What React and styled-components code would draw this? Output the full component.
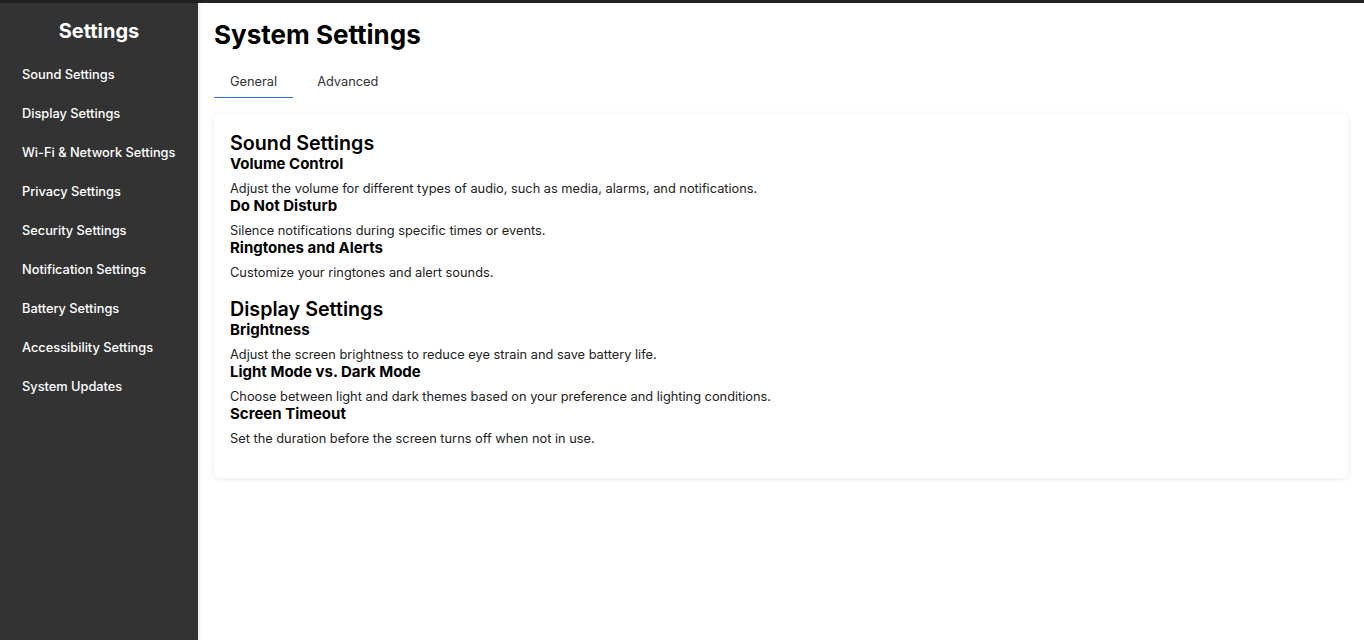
import React, { useState } from "react";
import styled, { createGlobalStyle } from "styled-components";

const Global = createGlobalStyle`
  html, body { margin: 0; padding: 0; background: #fff; }
  body { font-family: Inter, "Noto Sans", sans-serif; }
  * { box-sizing: border-box; }
`;

const Shell = styled.div`
  display: flex;
  min-height: 640px;
  border-top: 3px solid #222;
`;

const Sidebar = styled.nav`
  width: 198px;
  flex-shrink: 0;
  background: #333;
  color: #fff;
  padding: 16px;
  box-shadow: 1px 0 4px rgba(0, 0, 0, 0.12);
`;

const SideTitle = styled.h2`
  margin: 0 0 12px;
  font-size: 20px;
  line-height: 24px;
  font-weight: 700;
  text-align: center;
`;

const NavList = styled.ul`
  list-style: none;
  margin: 0;
  padding: 0;
`;

const NavItem = styled.li`
  padding: 11px 6px;
  font-size: 12.8px;
  line-height: 17px;
  font-weight: 500;
  color: #fff;
  white-space: nowrap;
  cursor: pointer;
`;

const Main = styled.main`
  flex: 1;
  padding: 16px;
`;

const PageTitle = styled.h1`
  margin: 0 0 15px;
  font-size: 26px;
  line-height: 32px;
  font-weight: 700;
  color: #000;
`;

const Tabs = styled.div`
  display: flex;
  gap: 8px;
  margin-bottom: 16px;
`;

const Tab = styled.button`
  border: none;
  background: none;
  font-family: inherit;
  font-size: 12.8px;
  line-height: 16px;
  color: #333;
  padding: 8px 16px 7px;
  border-bottom: 1px solid ${(p) => (p.$active ? "#2f6fd6" : "transparent")};
  cursor: pointer;
`;

const Card = styled.section`
  background: #fff;
  border-radius: 6px;
  padding: 17px 16px 15px;
  box-shadow: 0 1px 6px rgba(0, 0, 0, 0.09);
`;

const Group = styled.div`
  margin-bottom: 16px;
`;

const GroupTitle = styled.h2`
  margin: 0;
  font-size: 19.7px;
  line-height: 24px;
  font-weight: 600;
  color: #000;
`;

const ItemTitle = styled.h3`
  margin: 0 0 8px;
  font-size: 15px;
  line-height: 18px;
  font-weight: 700;
  color: #000;
`;

const ItemText = styled.p`
  margin: 0;
  font-size: 12.8px;
  line-height: 16px;
  color: #222;
`;

const nav = [
  "Sound Settings",
  "Display Settings",
  "Wi-Fi & Network Settings",
  "Privacy Settings",
  "Security Settings",
  "Notification Settings",
  "Battery Settings",
  "Accessibility Settings",
  "System Updates",
];

const groups = [
  {
    title: "Sound Settings",
    items: [
      ["Volume Control", "Adjust the volume for different types of audio, such as media, alarms, and notifications."],
      ["Do Not Disturb", "Silence notifications during specific times or events."],
      ["Ringtones and Alerts", "Customize your ringtones and alert sounds."],
    ],
  },
  {
    title: "Display Settings",
    items: [
      ["Brightness", "Adjust the screen brightness to reduce eye strain and save battery life."],
      ["Light Mode vs. Dark Mode", "Choose between light and dark themes based on your preference and lighting conditions."],
      ["Screen Timeout", "Set the duration before the screen turns off when not in use."],
    ],
  },
];

export default function App() {
  const [tab, setTab] = useState("General");
  return (
    <>
      <Global />
      <Shell>
        <Sidebar>
          <SideTitle>Settings</SideTitle>
          <NavList>
            {nav.map((n) => (
              <NavItem key={n}>{n}</NavItem>
            ))}
          </NavList>
        </Sidebar>
        <Main>
          <PageTitle>System Settings</PageTitle>
          <Tabs>
            {["General", "Advanced"].map((t) => (
              <Tab key={t} $active={tab === t} onClick={() => setTab(t)}>
                {t}
              </Tab>
            ))}
          </Tabs>
          <Card>
            {groups.map((g) => (
              <Group key={g.title}>
                <GroupTitle>{g.title}</GroupTitle>
                {g.items.map(([h, d]) => (
                  <div key={h}>
                    <ItemTitle>{h}</ItemTitle>
                    <ItemText>{d}</ItemText>
                  </div>
                ))}
              </Group>
            ))}
          </Card>
        </Main>
      </Shell>
    </>
  );
}
